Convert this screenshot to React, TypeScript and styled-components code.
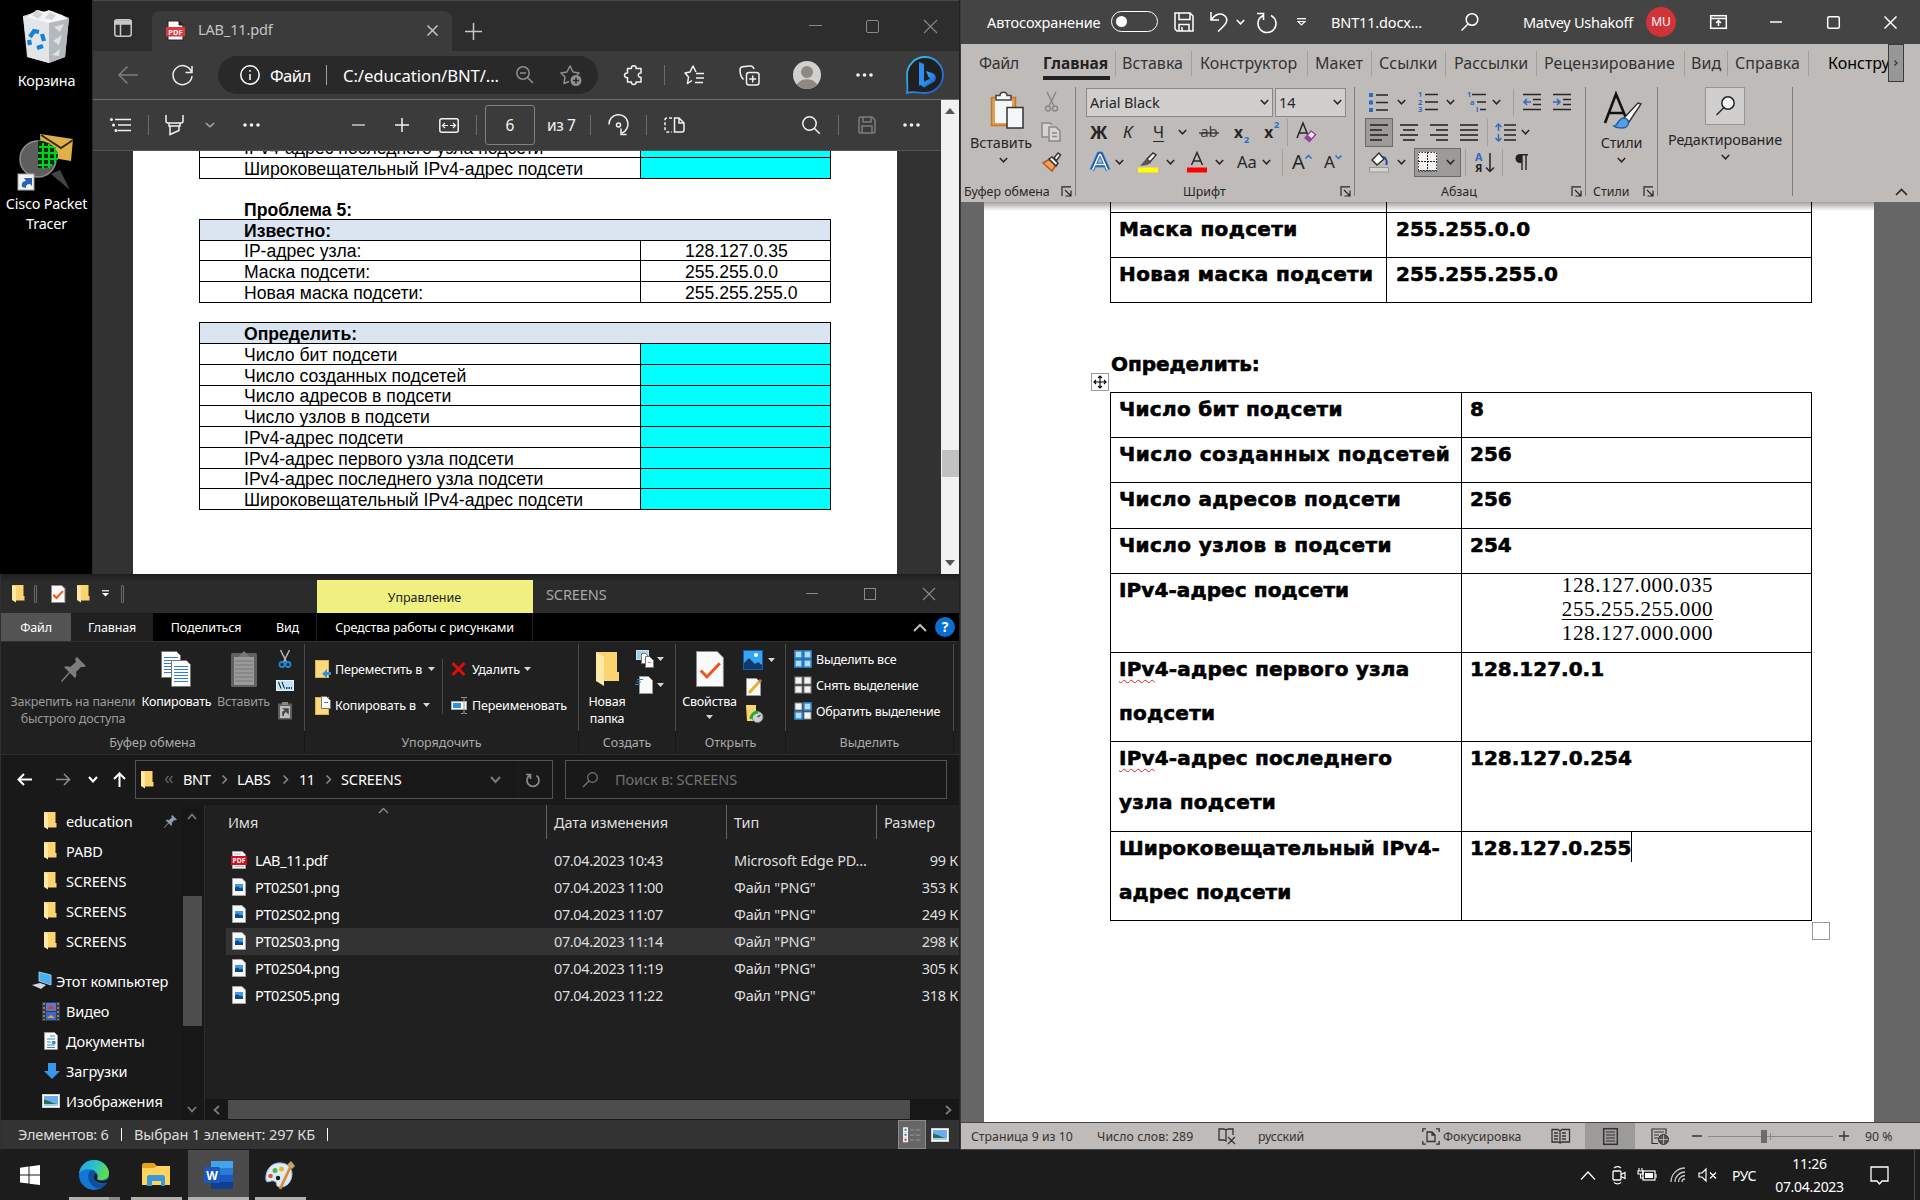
import React from "react";
import styled, { createGlobalStyle, css } from "styled-components";

const UI = `"Noto Sans", "Open Sans", sans-serif`;

const Global = createGlobalStyle`
  * { box-sizing: border-box; }
  html, body { margin: 0; padding: 0; background: #000; }
  body { font-family: ${UI}; overflow: hidden; }
`;

/* ---------- shared primitives ---------- */

type Gap = { $ml?: number };
type Sized = Gap & { $w?: number; $ls?: number };

const gap = css<Gap>`
  flex: none;
  margin-left: ${(p) => p.$ml ?? 0}px;
`;

const Glyph = styled.svg<Gap>`
  ${gap}
  display: block;
  fill: none;
  stroke: currentColor;
  stroke-width: 1.5;
  overflow: visible;
`;

const Text = styled.span<Sized>`
  ${gap}
  width: ${(p) => (p.$w ? `${p.$w}px` : "auto")};
  letter-spacing: ${(p) => p.$ls ?? 0}px;
  white-space: nowrap;
`;

const Row = styled.div`
  display: flex;
  align-items: center;
`;

type IconProps = { w: number; h: number; ml?: number; children: React.ReactNode; color?: string };
const Icon = ({ w, h, ml, children, color }: IconProps) => (
  <Glyph width={w} height={h} viewBox={`0 0 ${w} ${h}`} $ml={ml} color={color}>
    {children}
  </Glyph>
);

const Chevron = ({ ml, color, w = 9 }: { ml?: number; color?: string; w?: number }) => (
  <Icon w={w} h={6} ml={ml} color={color}>
    <path d={`M.8 1 L${w / 2} 4.8 L${w - 0.8} 1`} />
  </Icon>
);

const Tri = ({ ml }: { ml?: number }) => (
  <Icon w={7} h={4} ml={ml} color="#d8d8d8">
    <path d="M0 0h7L3.5 4z" fill="currentColor" stroke="none" />
  </Icon>
);

const Folder = ({ ml }: { ml?: number }) => (
  <Icon w={13} h={18} ml={ml}>
    <path d="M0 0h11.5v11h1v4.500H2z" fill="#fbd36f" stroke="none" />
    <path d="M0 0l4 2v15.500L0 15z" fill="#ffe9a6" stroke="none" />
  </Icon>
);

/* ---------- page frame ---------- */

const Screen = styled.div`
  width: 1920px;
  height: 1200px;
  display: flex;
  flex-direction: column;
  background: #000;
  overflow: hidden;
`;
const Main = styled.div`
  display: flex;
  height: 1150px;
  flex: none;
`;
const LeftHalf = styled.div`
  width: 960px;
  flex: none;
  display: flex;
  flex-direction: column;
`;
const TopLeft = styled.div`
  display: flex;
  height: 574px;
  flex: none;
`;

/* ---------- desktop ---------- */

const Desktop = styled.div`
  width: 92px;
  flex: none;
  background: #000;
  display: flex;
  flex-direction: column;
  align-items: center;
`;
const Shortcut = styled.div<{ $top: number }>`
  margin-top: ${(p) => p.$top}px;
  display: flex;
  flex-direction: column;
  align-items: center;
  color: #fff;
  font-size: 14.4px;
  letter-spacing: -0.2px;
  line-height: 20px;
  text-align: center;
  white-space: nowrap;
`;
const ShortcutName = styled.div<{ $gap: number }>`
  margin-top: ${(p) => p.$gap}px;
  padding-left: 1px;
`;

const DesktopArea = () => (
  <Desktop>
    <Shortcut $top={9}>
      <Icon w={48} h={55}>
        <g stroke="none">
          <path d="M1 7L14 3l16-1 17 7-4 39-16 6-22-6z" fill="#c9cdd1" />
          <path d="M1 7l26 6v41L6 48z" fill="#e3e6e8" />
          <path d="M27 13l20-4-4 39-16 6z" fill="#b4b9be" />
          <path d="M4 8l6-4 6-3 6 2 5-2 6 3 7 2 5 4-18 4z" fill="#f4f5f6" />
          <path d="M14 1l7 4-5 5-6-4zM28 3l6 3-4 5-7-2z" fill="#d2d6d9" />
          <path d="M32 18l10-3-4 8zM31 32l9-6-3 10zM30 46l8-6-1 7z" fill="#dfe2e5" />
        </g>
        <g stroke="#1183d6" strokeWidth="4.2">
          <path d="M8 28l4-6 5 1M20 25l2 7M21 37l-6 2M8 36l-1-5" />
        </g>
      </Icon>
      <ShortcutName $gap={7}>Корзина</ShortcutName>
    </Shortcut>
    <Shortcut $top={42}>
      <Icon w={56} h={58}>
        <path d="M22 1l33 5-2 22-30-5z" fill="#e0b04a" stroke="none" />
        <path d="M23 2l20 13L55 7" stroke="#3b2b08" strokeWidth="2" />
        <path d="M33 41l9-4 10 20z" fill="#444" stroke="none" />
        <circle cx="20" cy="26" r="18" fill="#5e5e5e" stroke="#8c8c8c" strokeWidth="1.5" />
        <path d="M20 8c10-1 18 6 20 14-1 9-8 14-20 13z" fill="#0a2a0a" stroke="none" />
        <path d="M21 14h15M20 20h20M20 26h20M20 32h14M25 10v26M31 11v24M37 14v16" stroke="#00d21c" strokeWidth="2" />
        <rect x="0" y="41" width="16" height="16" fill="#f2f2f2" stroke="#aaa" strokeWidth="1" />
        <path d="M4 54c-1-5 2-6 4-6l-2-3h8v8l-2-2c-3 0-4 1-4 4z" fill="#2c62b5" stroke="none" />
      </Icon>
      <ShortcutName $gap={3}>
        Cisco Packet
        <br />
        Tracer
      </ShortcutName>
    </Shortcut>
  </Desktop>
);

/* ---------- Edge ---------- */

const Edge = styled.section`
  width: 868px;
  flex: none;
  display: flex;
  flex-direction: column;
  background: #3b3b3b;
  border-left: 1px solid #2a2a2a;
  border-right: 1px solid #222;
  overflow: hidden;
  color: #f2f2f2;
`;
const EdgeTabs = styled(Row)`
  height: 51px;
  flex: none;
  background: #2d2d2d;
  border-top: 1px solid #474747;
`;
const EdgeTab = styled(Row)`
  width: 300px;
  height: 40px;
  margin: 10px 0 0 20px;
  padding-bottom: 1px;
  border-radius: 8px 8px 0 0;
  background: #3b3b3b;
  flex: none;
  color: #c4c4c4;
  font-size: 14.5px;
`;
const TabTitle = styled(Text)`
  padding-bottom: 3px;
`;
const EdgeNav = styled(Row)`
  height: 49px;
  flex: none;
  border-bottom: 1px solid #6e6e6e;
`;
const AddressPill = styled(Row)<Gap>`
  ${gap}
  width: 380px;
  height: 38px;
  border-radius: 19px;
  background: #292929;
  font-size: 16.7px;
  color: #fff;
`;
const VLine = styled.span<Gap & { $h?: number; $c?: string }>`
  ${gap}
  width: 1px;
  height: ${(p) => p.$h ?? 20}px;
  background: ${(p) => p.$c ?? "#6b6b6b"};
`;
const Avatar = styled.span<Gap>`
  ${gap}
  width: 28px;
  height: 28px;
  border-radius: 50%;
  background: #d2d0ce;
  overflow: hidden;
`;
const EdgeBody = styled.div`
  flex: 1;
  display: flex;
  min-height: 0;
`;
const PdfPane = styled.div`
  width: 848px;
  display: flex;
  flex-direction: column;
  background: #323232;
  flex: none;
`;
const PdfBar = styled(Row)`
  height: 51px;
  flex: none;
  background: #3b3b3b;
  border-bottom: 1px solid #555;
  font-size: 15.5px;
`;
const PageBox = styled(Row)<Gap>`
  ${gap}
  width: 50px;
  height: 40px;
  justify-content: center;
  border: 1px solid #808080;
  border-radius: 3px;
`;
const PdfPage = styled.div`
  width: 764px;
  margin-left: 40px;
  flex: 1;
  background: #fff;
  overflow: hidden;
  color: #000;
  font: 17.6px "Liberation Sans", Arial, sans-serif;
`;
const PdfTable = styled.div<{ $mt: number }>`
  width: 632px;
  margin: ${(p) => p.$mt}px 0 0 66px;
  border: 1px solid #000;
  border-top: none;
`;
const PdfRow = styled.div<{ $h: number; $head?: boolean }>`
  display: flex;
  height: ${(p) => p.$h}px;
  line-height: ${(p) => p.$h + 1}px;
  border-top: 1px solid #000;
  background: ${(p) => (p.$head ? "#dbe5f1" : "#fff")};
  font-weight: ${(p) => (p.$head ? 700 : 400)};
  white-space: nowrap;
`;
const PdfName = styled.span<{ $wide?: boolean }>`
  padding-left: 44px;
  width: ${(p) => (p.$wide ? 630 : 440)}px;
  flex: none;
`;
const PdfValue = styled.span<{ $fill?: boolean }>`
  flex: 1;
  border-left: 1px solid #000;
  padding-left: 44px;
  background: ${(p) => (p.$fill ? "#00ffff" : "transparent")};
`;
const PdfHeading = styled.div`
  font-weight: 700;
  height: 20px;
  line-height: 22px;
  margin: 20px 0 0 111px;
`;
const Scrollbar = styled.div`
  width: 18px;
  flex: none;
  background: #f1f1f1;
  display: flex;
  flex-direction: column;
  align-items: flex-end;
  color: #555;
`;
const ScrollThumb = styled.div`
  width: 17px;
  height: 27px;
  margin-top: 336px;
  background: #c1c1c1;
`;
const ScrollArrow = styled.div<{ $mt: number }>`
  margin: ${(p) => p.$mt}px 4px 0 0;
`;

const ANSWERS: [string, number][] = [
  ["Число бит подсети", 21],
  ["Число созданных подсетей", 21],
  ["Число адресов в подсети", 20],
  ["Число узлов в подсети", 21],
  ["IPv4-адрес подсети", 21],
  ["IPv4-адрес первого узла подсети", 21],
  ["IPv4-адрес последнего узла подсети", 20],
  ["Широковещательный IPv4-адрес подсети", 21],
];

const Dots = ({ ml, color }: { ml?: number; color?: string }) => (
  <Icon w={17} h={4} ml={ml} color={color}>
    <g fill="currentColor" stroke="none">
      <circle cx="2" cy="2" r="1.8" />
      <circle cx="8.5" cy="2" r="1.8" />
      <circle cx="15" cy="2" r="1.8" />
    </g>
  </Icon>
);

const EdgeWindow = () => (
  <Edge>
    <EdgeTabs>
      <Icon w={18} h={18} ml={21} color="#c8c8c8">
        <rect x=".8" y="2.8" width="16.4" height="16.4" rx="2.5" />
        <path d="M1 6h16M6.5 6v13" />
        <path d="M1 4h16v3H1z" fill="currentColor" />
      </Icon>
      <EdgeTab>
        <Icon w={19} h={20} ml={14}>
          <path d="M2 0h11l4 4v15H2z" fill="#fff" stroke="#222" strokeWidth="1" />
          <path d="M13 0v4h4z" fill="#222" stroke="#222" strokeWidth="1" />
          <rect x="0" y="6" width="19" height="9.5" rx="1" fill="#e5353b" stroke="none" />
          <text x="9.5" y="13.6" fill="#fff" stroke="none" textAnchor="middle" fontSize="7.5" fontWeight="700" fontFamily="Noto Sans">PDF</text>
        </Icon>
        <TabTitle $ml={13} $w={219} $ls={-0.15}>LAB_11.pdf</TabTitle>
        <Icon w={11} h={11} ml={10}><path d="M.5 .5l10 10M10.5 .5l-10 10" /></Icon>
      </EdgeTab>
      <Icon w={17} h={17} ml={13} color="#c8c8c8"><path d="M8.5 5v17M0 13.5h17" /></Icon>
      <Icon w={13} h={2} ml={327} color="#8a8a8a"><path d="M0 .5h13" strokeWidth="1" /></Icon>
      <Icon w={13} h={13} ml={44} color="#8a8a8a"><rect x=".5" y=".5" width="12" height="12" rx="1.5" strokeWidth="1" /></Icon>
      <Icon w={13} h={13} ml={45} color="#8a8a8a"><path d="M0 0l13 13M13 0L0 13" strokeWidth="1.1" /></Icon>
    </EdgeTabs>
    <EdgeNav>
      <Icon w={20} h={18} ml={25} color="#7d7d7d"><path d="M20 9H1M9.5 .5L1 9l8.5 8.5" /></Icon>
      <Icon w={21} h={21} ml={34} color="#ededed"><path d="M19.5 7A9.5 9.5 0 1 0 20 11M20 1v6.500h-6.500" /></Icon>
      <AddressPill $ml={25}>
        <Icon w={20} h={20} ml={22}>
          <circle cx="10" cy="10" r="9.2" />
          <path d="M10 9v6M10 5v1.8" />
        </Icon>
        <Text $ml={10} $w={41} $ls={-0.6}>Файл</Text>
        <VLine $ml={15} $c="#a0a0a0" />
        <Text $ml={16} $w={157} $ls={-0.1}>C:/education/BNT/...</Text>
        <Icon w={18} h={18} ml={16} color="#8f8f8f"><circle cx="7" cy="7" r="6.2" /><path d="M11.5 11.500L17 17M4 7h6" /></Icon>
        <Icon w={22} h={21} ml={26} color="#8f8f8f">
          <path d="M9 16.500l-5 2 1-6.500L1 8l6-1 3-6 3 6 6 1-2 2" strokeLinejoin="round" />
          <circle cx="16" cy="15.5" r="5.5" fill="currentColor" stroke="none" />
          <path d="M16 12.500v6M13 15.500h6" stroke="#292929" />
        </Icon>
      </AddressPill>
      <Icon w={20} h={20} ml={26}>
        <path d="M3.500 3.500h4c-1-3.800 5.500-3.800 4.500 0h5v4.500c-3.600-.8-3.600 5 0 4.200V17h-5c1 3.300-5.500 3.300-4.500 0h-4v-4.500c-4 .8-4-5 0-4.500z" strokeLinejoin="round" />
      </Icon>
      <VLine $ml={20} />
      <Icon w={20} h={20} ml={19}>
        <path d="M8 15.500L3.500 18.500l1-6.500L1 8l5-1L9 1l3 6M12 8.500h8M12 13h8M11 17.500h8" strokeLinejoin="round" />
      </Icon>
      <Icon w={21} h={21} ml={35}>
        <rect x="7.5" y="7.5" width="12.5" height="12.5" rx="2.5" />
        <path d="M13.700 10.500v7M10.200 14h7M4.500 14.500C2 12 1 8 1 5c0-2 1-3 2.500-3.300L11 1c2-.2 3.500 1 4 3" />
      </Icon>
      <Avatar $ml={33}>
        <Icon w={28} h={28}>
          <g fill="#8d8882" stroke="none"><circle cx="14" cy="11" r="6" /><path d="M3 28c0-13 22-13 22 0z" /></g>
        </Icon>
      </Avatar>
      <Dots ml={35} />
      <Icon w={38} h={38} ml={33}>
        <defs>
          <linearGradient id="bing" x1="0" y1="0" x2="1" y2="1"><stop offset="0" stopColor="#35c8f0" /><stop offset="1" stopColor="#1b55d9" /></linearGradient>
        </defs>
        <path d="M1 37c1-5 0-10 0-18A18 18 0 1 1 19 37c-6 0-12-2-18 0z" fill="#202020" stroke="url(#bing)" strokeWidth="1.8" />
        <path d="M13 6l5 2v18l-5 4z" fill="#2f8cf0" stroke="none" />
        <path d="M13 28l5 3.500 11-6.500c2-4 0-7-3-8l-6-2 2.500 6 2 1.500z" fill="url(#bing)" stroke="none" />
      </Icon>
    </EdgeNav>
    <EdgeBody>
      <PdfPane>
        <PdfBar>
          <Icon w={21} h={14} ml={17}>
            <path d="M5 1.500h16M8 7h13M8 12.500h13" />
            <g fill="currentColor" stroke="none"><circle cx="1.5" cy="1.5" r="1.5" /><circle cx="3.5" cy="7" r="1.5" /><circle cx="6" cy="12.5" r="1.5" /></g>
          </Icon>
          <VLine $ml={17} />
          <Icon w={19} h={20} ml={16}><path d="M1 0v6a2 2 0 0 0 2 2h13a2 2 0 0 0 2-2V0M4 8v3h11V8M5 11v8.500l9-4V11" /></Icon>
          <Chevron ml={21} color="#a8a8a8" w={10} />
          <Dots ml={28} />
          <Icon w={13} h={2} ml={92} color="#c8c8c8"><path d="M0 1h13" /></Icon>
          <Icon w={14} h={14} ml={30}><path d="M7 0v14M0 7h14" /></Icon>
          <Icon w={20} h={15} ml={30}><rect x=".8" y=".8" width="18.4" height="13.4" rx="2" /><path d="M9 7.500H4M6 5L3.500 7.500 6 10M11 7.500h5M14 5l2.500 2.500L14 10" strokeWidth="1.2" /></Icon>
          <VLine $ml={17} />
          <PageBox $ml={8}>6</PageBox>
          <Text $ml={12} $w={30} $ls={-0.4}>из 7</Text>
          <VLine $ml={13} />
          <Icon w={21} h={20} ml={17}><path d="M1 9.500A9.500 9.500 0 1 1 14 18M20 13M18.500 19.500H13v-6" /><circle cx="10.5" cy="10" r="2" /></Icon>
          <VLine $ml={17} />
          <Icon w={21} h={16} ml={17}><path d="M10.500 1v14H18a2 2 0 0 0 2-2V6l-5-5zM15 1v5h5" /><path d="M8 1H3a2 2 0 0 0-2 2v10a2 2 0 0 0 2 2h5" strokeDasharray="3 2" /></Icon>
          <Icon w={18} h={18} ml={117}><circle cx="7.5" cy="7.5" r="6.7" /><path d="M12.300 12.300l5.500 5.500" /></Icon>
          <VLine $ml={18} />
          <Icon w={18} h={18} ml={19} color="#7d7d7d"><path d="M1 2.500A1.500 1.500 0 0 1 2.500 1h11.500l3 3v11.500a1.500 1.500 0 0 1-1.500 1.500h-13A1.500 1.500 0 0 1 1 15.500zM5 1v5h8V1M4 17v-7h10v7" /></Icon>
          <Dots ml={27} />
        </PdfBar>
        <PdfPage>
          <PdfTable $mt={-14}>
            <PdfRow $h={20}><PdfName>IPv4-адрес последнего узла подсети</PdfName><PdfValue $fill /></PdfRow>
            <PdfRow $h={21}><PdfName>Широковещательный IPv4-адрес подсети</PdfName><PdfValue $fill /></PdfRow>
          </PdfTable>
          <PdfHeading>Проблема 5:</PdfHeading>
          <PdfTable $mt={0}>
            <PdfRow $h={21} $head><PdfName $wide>Известно:</PdfName></PdfRow>
            <PdfRow $h={20}><PdfName>IP-адрес узла:</PdfName><PdfValue>128.127.0.35</PdfValue></PdfRow>
            <PdfRow $h={21}><PdfName>Маска подсети:</PdfName><PdfValue>255.255.0.0</PdfValue></PdfRow>
            <PdfRow $h={21}><PdfName>Новая маска подсети:</PdfName><PdfValue>255.255.255.0</PdfValue></PdfRow>
          </PdfTable>
          <PdfTable $mt={19}>
            <PdfRow $h={21} $head><PdfName $wide>Определить:</PdfName></PdfRow>
            {ANSWERS.map(([t, h]) => (
              <PdfRow key={t} $h={h}><PdfName>{t}</PdfName><PdfValue $fill /></PdfRow>
            ))}
          </PdfTable>
        </PdfPage>
      </PdfPane>
      <Scrollbar>
        <ScrollArrow $mt={8}><Icon w={10} h={6}><path d="M0 6h10L5 0z" fill="currentColor" stroke="none" /></Icon></ScrollArrow>
        <ScrollThumb />
        <ScrollArrow $mt={83}><Icon w={10} h={6}><path d="M0 0h10L5 6z" fill="currentColor" stroke="none" /></Icon></ScrollArrow>
      </Scrollbar>
    </EdgeBody>
  </Edge>
);

/* ---------- Explorer ---------- */

const Explorer = styled.section`
  flex: 1;
  min-height: 0;
  display: flex;
  flex-direction: column;
  background: #191919;
  border-left: 1px solid #303030;
  border-right: 1px solid #222;
  color: #fff;
  overflow: hidden;
`;
const ExTitle = styled.div`
  height: 39px;
  flex: none;
  display: flex;
  align-items: center;
  background: linear-gradient(#1e1e1e, #2b2b2b 8px);
`;
const QuickDivider = styled.span<Gap>`
  ${gap}
  width: 3px;
  height: 18px;
  border: 1px solid #6a6a6a;
  border-radius: 1px;
`;
const ManageTab = styled.div`
  width: 216px;
  height: 33px;
  align-self: flex-end;
  margin-left: 193px;
  flex: none;
  background: #f0f080;
  color: #222;
  text-align: center;
  font-size: 12.5px;
  line-height: 36px;
  padding-right: 1px;
`;
const ExCaption = styled(Text)`
  color: #a8a8a8;
  font-size: 14.5px;
`;
const ExTabs = styled.div`
  height: 28px;
  flex: none;
  display: flex;
  align-items: center;
  background: #000;
  font-size: 12.5px;
`;
const ExTab = styled.div<{ $w: number; $bg?: string; $edge?: boolean }>`
  width: ${(p) => p.$w}px;
  height: 28px;
  line-height: 29px;
  flex: none;
  text-align: center;
  white-space: nowrap;
  letter-spacing: -0.15px;
  background: ${(p) => p.$bg ?? "transparent"};
  border-right: ${(p) => (p.$edge ? "1px solid #222" : "none")};
`;
const Help = styled.span`
  width: 20px;
  height: 20px;
  margin-left: 8px;
  border-radius: 50%;
  background: #0a6fd0;
  color: #fff;
  font-size: 14px;
  font-weight: 700;
  line-height: 20px;
  text-align: center;
`;
const ExRibbon = styled.div`
  height: 114px;
  flex: none;
  display: flex;
  background: #202020;
  border-top: 1px solid #2f2f2f;
  border-bottom: 1px solid #2f2f2f;
  font-size: 12.5px;
`;
const ExGroup = styled.div<{ $w: number }>`
  width: ${(p) => p.$w}px;
  flex: none;
  display: flex;
  flex-direction: column;
`;
const ExGroupBody = styled.div`
  height: 89px;
  margin-top: 2px;
  border-right: 1px solid #4a4a4a;
  display: flex;
`;
const ExGroupName = styled.div`
  flex: 1;
  text-align: center;
  line-height: 23px;
  color: #ababab;
  letter-spacing: 0;
  border-right: 1px solid #181818;
`;
const BigButton = styled.div<{ $w: number; $ml?: number; $dim?: boolean }>`
  ${gap}
  width: ${(p) => p.$w}px;
  padding-top: 7px;
  display: flex;
  flex-direction: column;
  align-items: center;
  text-align: center;
  white-space: nowrap;
  line-height: 17px;
  letter-spacing: -0.2px;
  color: ${(p) => (p.$dim ? "#9b9b9b" : "#fff")};
`;
const BigIcon = styled.div`
  height: 36px;
  margin-bottom: 6px;
  display: flex;
  align-items: center;
`;
const SmallColumn = styled.div<{ $ml?: number; $pitch: number; $top?: number; $w?: number }>`
  ${gap}
  width: ${(p) => (p.$w ? `${p.$w}px` : "auto")};
  padding-top: ${(p) => p.$top ?? 2}px;
  display: flex;
  flex-direction: column;
  & > * {
    height: ${(p) => p.$pitch}px;
  }
`;
const GroupRule = styled.span`
  width: 1px;
  height: 55px;
  margin-top: 15px;
  background: #4a4a4a;
  flex: none;
`;
const ExNav = styled.div`
  height: 50px;
  flex: none;
  display: flex;
  align-items: center;
  padding-bottom: 1px;
  background: #191919;
  font-size: 14.5px;
`;
const NavBox = styled(Row)<Sized>`
  ${gap}
  width: ${(p) => p.$w}px;
  height: 39px;
  border: 1px solid #535353;
`;
const Crumbs = styled(Text)`
  padding-bottom: 2px;
`;
const SearchHint = styled(Text)`
  color: #727272;
  padding-bottom: 2px;
`;
const ExBody = styled.div`
  height: 315px;
  flex: none;
  display: flex;
  font-size: 14.5px;
`;
const Tree = styled.div`
  width: 181px;
  flex: none;
  display: flex;
  flex-direction: column;
  padding-top: 1px;
`;
const TreeItem = styled(Row)<{ $root?: boolean }>`
  height: 30px;
  flex: none;
  margin-top: ${(p) => (p.$root ? 10 : 0)}px;
  padding-left: ${(p) => (p.$root ? 31 : 41)}px;
`;
const TreeGlyph = styled(Row)<{ $w: number }>`
  width: ${(p) => p.$w}px;
  flex: none;
`;
const TreeScroll = styled.div`
  width: 20px;
  flex: none;
  background: #171717;
  display: flex;
  flex-direction: column;
  align-items: center;
  justify-content: space-between;
  padding: 8px 0 7px;
`;
const TreeThumb = styled.div`
  width: 19px;
  height: 130px;
  margin-top: -2px;
  margin-bottom: 2px;
  background: #4d4d4d;
`;
const ListPane = styled.div`
  flex: 1;
  display: flex;
  flex-direction: column;
  margin-left: 2px;
  border-left: 1px solid #2b2b2b;
  background: #202020;
  min-width: 0;
`;
const ListHead = styled.div`
  height: 33px;
  flex: none;
  display: grid;
  grid-template-columns: 342px 180px 150px 1fr;
  color: #dedede;
`;
const HeadCell = styled.div<{ $pad: number; $last?: boolean }>`
  padding-left: ${(p) => p.$pad}px;
  line-height: 34px;
  white-space: nowrap;
  letter-spacing: -0.1px;
  border-right: ${(p) => (p.$last ? "none" : "1px solid #636363")};
  display: flex;
`;
const SortMark = styled.span`
  margin: 3px 0 0 121px;
`;
const Spacer = styled.div`
  height: 9px;
  flex: none;
`;
const FileRow = styled.div<{ $on?: boolean }>`
  height: 27px;
  flex: none;
  margin-left: 21px;
  padding-bottom: 2px;
  display: grid;
  grid-template-columns: 29px 299px 180px 148px 1fr;
  align-items: center;
  white-space: nowrap;
  background: ${(p) => (p.$on ? "#333" : "transparent")};
  color: #dedede;
  overflow: hidden;
`;
const FileGlyph = styled.span`
  padding-left: 6px;
`;
const FileName = styled.span`
  color: #fff;
  letter-spacing: -0.38px;
`;
const FileDate = styled.span`
  letter-spacing: -0.38px;
`;
const FileKind = styled.span`
  letter-spacing: -0.18px;
`;
const FileSize = styled.span`
  text-align: right;
  padding-right: 1px;
  letter-spacing: -0.3px;
`;
const HScroll = styled(Row)`
  height: 21px;
  margin-top: auto;
  background: #171717;
  padding-left: 8px;
`;
const HThumb = styled.div`
  width: 682px;
  height: 19px;
  margin-left: 8px;
  background: #4d4d4d;
`;
const ExStatus = styled(Row)`
  height: 29px;
  flex: none;
  background: #333;
  color: #dcdcdc;
  font-size: 14.5px;
`;
const StatusText = styled(Text)`
  padding-bottom: 1px;
`;
const ViewToggle = styled(Row)`
  width: 28px;
  height: 29px;
  margin-left: 570px;
  justify-content: center;
  background: #666;
  border: 1px solid #8a8a8a;
`;

const CheckDoc = ({ w, h, ml }: { w: number; h: number; ml?: number }) => (
  <Icon w={w} h={h} ml={ml}>
    <path d={`M.5 .5h${w * 0.74}l${w * 0.22} ${w * 0.22}V${h - 0.5}H.5z`} fill="#fafafa" stroke="#8a8a8a" strokeWidth="1" />
    <path d={`M${w * 0.17} ${h * 0.54}l${w * 0.22} ${h * 0.18}L${w * 0.85} ${h * 0.34}`} stroke="#f0541c" strokeWidth={w > 20 ? 3 : 2} />
  </Icon>
);
const Sheet = ({ x, y, w, h, lines = "#2f7ed8" }: { x: number; y: number; w: number; h: number; lines?: string }) => (
  <g>
    <path d={`M${x + 0.5} ${y + 0.5}h${w - 5}l4 4v${h - 5}h-${w - 1}z`} fill="#fff" stroke="#777" strokeWidth="1" />
    {Array.from({ length: Math.floor((h - 8) / 3) }, (_, i) => (
      <path key={i} d={`M${x + 3} ${y + 6.5 + i * 3}h${w - 6}`} stroke={lines} strokeWidth="1" />
    ))}
  </g>
);
const PinGlyph = ({ s, ml, color }: { s: number; ml?: number; color: string }) => (
  <Glyph width={s} height={s} viewBox="0 0 25 25" $ml={ml} color={color}>
    <path d="M16 0l9 9-2 1-3 0-5 5c1 3 0 5-1 6l-5-5-8 9-1-1 8-9-5-5c2-1 4-1 6 0l6-5-1-3z" fill="currentColor" stroke="none" />
  </Glyph>
);
const Picture = ({ w, h, ml }: { w: number; h: number; ml?: number }) => (
  <Icon w={w} h={h} ml={ml}>
    <rect x=".5" y=".5" width={w - 1} height={h - 1} fill="#fff" stroke="#d0d0d0" strokeWidth="1" />
    <rect x="2" y="2" width={w - 4} height={h - 4} fill="#69aef0" stroke="none" />
    <path d={`M2 ${h * 0.4}l5 1.500 4 2 ${w - 13} 1.500v1H2z`} fill="#2f6b50" stroke="none" />
    <path d={`M2 ${h - 4}h${w - 4}v2H2z`} fill="#9fd0ee" stroke="none" />
  </Icon>
);
const PngFile = () => (
  <Icon w={14} h={18}>
    <path d="M.5 .5h9.500l3.500 3.500v13.500H.5z" fill="#fafafa" stroke="#a5a5a5" strokeWidth="1" />
    <rect x="3" y="6" width="8" height="7" fill="#3d9be8" stroke="none" />
    <path d="M3 13V9.500l3-1 2 2 1.500-1L11 11v2z" fill="#11458c" stroke="none" />
  </Icon>
);
const PdfFile = () => (
  <Icon w={16} h={18} ml={-1}>
    <path d="M1.500 .5h10l3 3v14h-13z" fill="#fafafa" stroke="#a5a5a5" strokeWidth="1" />
    <path d="M3 3h7M3 15.500h10" stroke="#bbb" strokeWidth="1" />
    <rect x="0" y="5" width="16" height="9" fill="#d40f1d" stroke="none" />
    <text x="8" y="12" fill="#fff" stroke="none" textAnchor="middle" fontSize="6.8" fontWeight="700" fontFamily="Noto Sans">PDF</text>
  </Icon>
);
const SelectGrid = ({ on }: { on: boolean[] }) => (
  <Icon w={18} h={18}>
    {on.map((a, i) => (
      <rect
        key={i}
        x={(i % 2) * 9 + 1}
        y={Math.floor(i / 2) * 9 + 1}
        width="7"
        height="7"
        fill={a ? "#b7dcfa" : "#f3f3f3"}
        stroke={a ? "#2f8fe0" : "#8a8a8a"}
        strokeWidth={a ? 1.6 : 1}
      />
    ))}
  </Icon>
);

const FILES: [string, string, string, string][] = [
  ["LAB_11.pdf", "07.04.2023 10:43", "Microsoft Edge PD...", "99 К"],
  ["PT02S01.png", "07.04.2023 11:00", 'Файл "PNG"', "353 К"],
  ["PT02S02.png", "07.04.2023 11:07", 'Файл "PNG"', "249 К"],
  ["PT02S03.png", "07.04.2023 11:14", 'Файл "PNG"', "298 К"],
  ["PT02S04.png", "07.04.2023 11:19", 'Файл "PNG"', "305 К"],
  ["PT02S05.png", "07.04.2023 11:22", 'Файл "PNG"', "318 К"],
];
const FOLDERS = ["education", "PABD", "SCREENS", "SCREENS", "SCREENS"];

const Crumb = ({ ml }: { ml: number }) => (
  <Icon w={5} h={9} ml={ml} color="#8a8a8a"><path d="M.5 .5l4 4-4 4" /></Icon>
);

const ExplorerWindow = () => (
  <Explorer>
    <ExTitle>
      <Folder ml={11} />
      <QuickDivider $ml={9} />
      <CheckDoc w={14} h={18} ml={14} />
      <Folder ml={12} />
      <Icon w={7} h={7} ml={12}><path d="M0 .8h7" strokeWidth="1.2" /><path d="M0 3h7L3.500 6.500z" fill="currentColor" stroke="none" /></Icon>
      <QuickDivider $ml={12} />
      <ManageTab>Управление</ManageTab>
      <ExCaption $ml={13} $w={61} $ls={-0.1}>SCREENS</ExCaption>
      <Icon w={12} h={2} ml={199} color="#8a8a8a"><path d="M0 .5h12" strokeWidth="1" /></Icon>
      <Icon w={12} h={12} ml={46} color="#8a8a8a"><rect x=".5" y=".5" width="11" height="11" strokeWidth="1" /></Icon>
      <Icon w={12} h={12} ml={47} color="#8a8a8a"><path d="M0 0l12 12M12 0L0 12" strokeWidth="1.1" /></Icon>
    </ExTitle>
    <ExTabs>
      <ExTab $w={70} $bg="#535353">Файл</ExTab>
      <ExTab $w={82} $bg="#202020">Главная</ExTab>
      <ExTab $w={106}>Поделиться</ExTab>
      <ExTab $w={58} $edge>Вид</ExTab>
      <ExTab $w={216} $edge>Средства работы с рисунками</ExTab>
      <Icon w={14} h={9} ml={380} color="#b8b8b8"><path d="M1 8l6-6 6 6" strokeWidth="2.2" /></Icon>
      <Help>?</Help>
    </ExTabs>
    <ExRibbon>
      <ExGroup $w={304}>
        <ExGroupBody>
          <BigButton $ml={7} $w={130} $dim>
            <BigIcon><PinGlyph s={25} color="#7d7d7d" /></BigIcon>
            Закрепить на панели
            <br />
            быстрого доступа
          </BigButton>
          <BigButton $w={77}>
            <BigIcon>
              <Icon w={31} h={36}><Sheet x={0} y={0} w={20} h={27} /><Sheet x={10} y={9} w={20} h={27} /></Icon>
            </BigIcon>
            Копировать
          </BigButton>
          <BigButton $w={57} $dim>
            <BigIcon>
              <Icon w={26} h={36}>
                <rect x="0" y="2" width="26" height="34" rx="1.5" fill="#606060" stroke="none" />
                <rect x="3" y="6" width="20" height="28" fill="#9a9a9a" stroke="none" />
                <path d="M7 6l6-6 6 6z" fill="#777" stroke="none" />
                <path d="M4 10h18M4 14h18M4 18h18M4 22h18M4 26h18M4 30h18" stroke="#777" strokeWidth="1" />
              </Icon>
            </BigIcon>
            Вставить
          </BigButton>
          <SmallColumn $pitch={26} $w={30}>
            <Row>
              <Icon w={12} h={18} ml={7}>
                <path d="M1.500 0l6 12M10.500 0l-6 12" stroke="#b9b9b9" />
                <circle cx="3" cy="14.5" r="2.5" stroke="#1b8ad6" strokeWidth="1.8" /><circle cx="9" cy="14.5" r="2.5" stroke="#1b8ad6" strokeWidth="1.8" />
              </Icon>
            </Row>
            <Row>
              <Icon w={18} h={11} ml={4}>
                <rect x=".5" y=".5" width="17" height="10" fill="#bfe3f8" stroke="#e8f5fd" strokeWidth="1" />
                <path d="M2.500 2l2.500 6.500M6 2l2.500 6.500" stroke="#111" strokeWidth="1" /><path d="M10 8h1.500M12.500 8H14M15 8h1" stroke="#111" />
              </Icon>
            </Row>
            <Row>
              <Icon w={14} h={18} ml={6}>
                <rect x="0" y="1.5" width="14" height="16" fill="#606060" stroke="none" />
                <rect x="2" y="4" width="10" height="12" fill="#bdbdbd" stroke="none" /><path d="M4 0h6v3H4z" fill="#888" stroke="none" />
                <path d="M5 14V10l3-1M6 7h4v4z" stroke="#444" fill="#444" />
              </Icon>
            </Row>
          </SmallColumn>
        </ExGroupBody>
        <ExGroupName>Буфер обмена</ExGroupName>
      </ExGroup>
      <ExGroup $w={274}>
        <ExGroupBody>
          <SmallColumn $ml={10} $pitch={36} $top={7} $w={127}>
            <Row>
              <Icon w={16} h={18}><rect x=".5" y=".5" width="13" height="17" fill="#fbd97e" stroke="#e0b04a" strokeWidth="1" /><path d="M16 12h-4V9l-5 5 5 4v-3h4z" fill="#2f8fe0" stroke="none" /></Icon>
              <Text $ml={4} $w={88} $ls={-0.2}>Переместить в</Text>
              <Tri ml={5} />
            </Row>
            <Row>
              <Icon w={17} h={19}><rect x=".5" y="1.5" width="13" height="17" fill="#fbd97e" stroke="#e0b04a" strokeWidth="1" /><Sheet x={6} y={0} w={10} h={13} /></Icon>
              <Text $ml={3} $w={84} $ls={-0.1}>Копировать в</Text>
              <Tri ml={4} />
            </Row>
          </SmallColumn>
          <GroupRule />
          <SmallColumn $ml={8} $pitch={36} $top={7}>
            <Row>
              <Icon w={15} h={14}><path d="M1.500 1l12 12M13.500 1l-12 12" stroke="#e00b0b" strokeWidth="3" /></Icon>
              <Text $ml={6} $w={47} $ls={-0.1}>Удалить</Text>
              <Tri ml={5} />
            </Row>
            <Row>
              <Icon w={17} h={17}>
                <rect x=".5" y="4.5" width="15" height="8" fill="#fff" stroke="#aaa" strokeWidth="1" /><rect x="2" y="6" width="8" height="5" fill="#2f8fe0" stroke="none" />
                <path d="M13 1v15M10 .5h2.500l.5 .5 .5-.5H16M10 16.500h2.500l.5-.5 .5 .5H16" stroke="#999" strokeWidth="1" />
              </Icon>
              <Text $ml={4} $ls={-0.12}>Переименовать</Text>
            </Row>
          </SmallColumn>
        </ExGroupBody>
        <ExGroupName>Упорядочить</ExGroupName>
      </ExGroup>
      <ExGroup $w={97}>
        <ExGroupBody>
          <BigButton $ml={2} $w={52}>
            <BigIcon>
              <Icon w={23} h={36}><path d="M0 1h21v20h2v9H4z" fill="#fbd36f" stroke="none" /><path d="M0 1l8 5v29L0 30z" fill="#ffe9a6" stroke="none" /></Icon>
            </BigIcon>
            Новая
            <br />
            папка
          </BigButton>
          <SmallColumn $ml={3} $pitch={26}>
            <Row>
              <Icon w={18} h={18}><rect x=".5" y=".5" width="12" height="9" fill="#9cd0f0" stroke="#ddd" strokeWidth="1" /><Sheet x={5} y={3} w={9} h={11} lines="#ccc" /><Sheet x={9} y={6} w={9} h={12} lines="#e08080" /></Icon>
              <Tri ml={3} />
            </Row>
            <Row>
              <Icon w={18} h={18}><path d="M3.500 .5h9l4 4v13h-13z" fill="#fafafa" stroke="#999" strokeWidth="1" /><path d="M1 3.500h6M0 6h5M-1 8.500h5" stroke="#2c7fc0" strokeWidth="1.2" /></Icon>
              <Tri ml={3} />
            </Row>
          </SmallColumn>
        </ExGroupBody>
        <ExGroupName>Создать</ExGroupName>
      </ExGroup>
      <ExGroup $w={110}>
        <ExGroupBody>
          <BigButton $ml={3} $w={61}>
            <BigIcon><CheckDoc w={28} h={36} /></BigIcon>
            Свойства
            <PropsArrow><Tri /></PropsArrow>
          </BigButton>
          <SmallColumn $ml={3} $pitch={27}>
            <Row>
              <Icon w={20} h={20}><rect x=".5" y=".5" width="19" height="19" fill="#35a7f0" stroke="#0d62b8" strokeWidth="1" /><path d="M1 19v-6l5-5 6 6 3-2 4 3v4z" fill="#12396e" stroke="none" /><circle cx="13" cy="5" r="2" fill="#fff" stroke="none" /></Icon>
              <Tri ml={5} />
            </Row>
            <Row>
              <Icon w={16} h={18} ml={3}><path d="M.5 .5h10l4 4v13H.5z" fill="#fafafa" stroke="#999" strokeWidth="1" /><path d="M3 15l10-11" stroke="#e8b32a" strokeWidth="3" /><path d="M13 4l2-2" stroke="#d26a6a" strokeWidth="3" /></Icon>
            </Row>
            <Row>
              <Icon w={18} h={18} ml={3}><path d="M0 0h10v16H1z" fill="#fbd36f" stroke="none" /><circle cx="11.5" cy="12" r="5.5" fill="#cfcfcf" stroke="#777" strokeWidth="1" /><path d="M5 14a7 7 0 0 1 7-7" stroke="#1fae3a" strokeWidth="3" /><path d="M11.500 12l3-2" stroke="#444" /></Icon>
            </Row>
          </SmallColumn>
        </ExGroupBody>
        <ExGroupName>Открыть</ExGroupName>
      </ExGroup>
      <ExGroup $w={168}>
        <ExGroupBody>
          <SmallColumn $ml={8} $pitch={26}>
            <Row><SelectGrid on={[true, true, true, true]} /><Text $ml={4} $ls={-0.22}>Выделить все</Text></Row>
            <Row><SelectGrid on={[false, false, false, false]} /><Text $ml={4} $ls={-0.26}>Снять выделение</Text></Row>
            <Row><SelectGrid on={[false, true, true, false]} /><Text $ml={4} $ls={-0.24}>Обратить выделение</Text></Row>
          </SmallColumn>
        </ExGroupBody>
        <ExGroupName>Выделить</ExGroupName>
      </ExGroup>
    </ExRibbon>
    <ExNav>
      <Icon w={15} h={13} ml={16}><path d="M15 6.500H1.500M7 1L1.500 6.500 7 12" strokeWidth="2" /></Icon>
      <Icon w={15} h={13} ml={24} color="#8a8a8a"><path d="M0 6.500h13.500M8 1l5.500 5.500L8 12" strokeWidth="1.6" /></Icon>
      <Icon w={10} h={7} ml={17}><path d="M1 1l4 4.500L9 1" strokeWidth="2" /></Icon>
      <Icon w={13} h={15} ml={15}><path d="M6.500 15V1.500M1 7l5.500-5.500L12 7" strokeWidth="2" /></Icon>
      <NavBox $ml={9} $w={418}>
        <Folder ml={5} />
        <Icon w={8} h={7} ml={11} color="#666"><path d="M3.500 0L.5 3.500l3 3.500M7.500 0l-3 3.500 3 3.500" strokeWidth="1.2" /></Icon>
        <Crumbs $ml={10} $w={28} $ls={-0.3}>BNT</Crumbs>
        <Crumb ml={11} />
        <Crumbs $ml={10} $w={35} $ls={-0.2}>LABS</Crumbs>
        <Crumb ml={11} />
        <Crumbs $ml={11} $w={14} $ls={-0.5}>11</Crumbs>
        <Crumb ml={13} />
        <Crumbs $ml={10} $w={61} $ls={-0.1}>SCREENS</Crumbs>
        <Icon w={11} h={8} ml={88} color="#7a7a7a"><path d="M1 1l4.500 5L10 1" strokeWidth="2" /></Icon>
        <VLine $ml={12} $h={37} $c="#141414" />
        <Icon w={14} h={14} ml={12} color="#8a8a8a"><path d="M3.500 2.500a6 6 0 1 0 7 0M0 1.500h4.500V6" strokeWidth="1.7" /></Icon>
      </NavBox>
      <NavBox $ml={12} $w={382}>
        <Icon w={15} h={15} ml={17} color="#7a7a7a"><circle cx="9.5" cy="5.5" r="4.8" strokeWidth="1.2" /><path d="M6 9L0 15" strokeWidth="1.2" /></Icon>
        <SearchHint $ml={17} $ls={-0.12}>Поиск в: SCREENS</SearchHint>
      </NavBox>
    </ExNav>
    <ExBody>
      <Tree>
        {FOLDERS.map((f, i) => (
          <TreeItem key={i}>
            <TreeGlyph $w={24}><Folder ml={2} /></TreeGlyph>
            <Text $w={98} $ls={-0.15}>{f}</Text>
            {i === 0 && <PinGlyph s={13} color="#8e9aa6" />}
          </TreeItem>
        ))}
        <TreeItem $root>
          <TreeGlyph $w={24}>
            <Icon w={20} h={18}><path d="M7 0l12 3v10L7 9z" fill="#45b1f5" stroke="#9fc4dc" strokeWidth="1" /><path d="M0 13l8-2 6 2-5 4z" fill="#cfd8de" stroke="none" /></Icon>
          </TreeGlyph>
          <Text $ls={-0.1}>Этот компьютер</Text>
        </TreeItem>
        <TreeItem>
          <TreeGlyph $w={24}>
            <Icon w={18} h={19}>
              <rect x="0" y="0" width="18" height="19" fill="#3a3a3a" stroke="none" /><rect x="4" y="1" width="10" height="8" fill="#5b74d8" stroke="none" /><rect x="4" y="10" width="10" height="8" fill="#3f66d0" stroke="none" />
              <path d="M5 7l4-4 4 4z" fill="#c8452f" stroke="none" /><path d="M5 16l4-3 4 3z" fill="#d8b02f" stroke="none" /><path d="M2 1v17M16 1v17" stroke="#999" strokeDasharray="2 2" />
            </Icon>
          </TreeGlyph>
          <Text $ls={-0.1}>Видео</Text>
        </TreeItem>
        <TreeItem>
          <TreeGlyph $w={24}>
            <Icon w={14} h={18} ml={2}><path d="M.5 .5h10l3 3v14H.5z" fill="#fafafa" stroke="#999" strokeWidth="1" /><path d="M6 4h5M3 7h8M3 10h4M3 13h8M3 15.500h8" stroke="#3c8cc8" strokeWidth="1" /><path d="M8 9h3.500v3H8z" fill="#3c8cc8" stroke="none" /></Icon>
          </TreeGlyph>
          <Text $ls={-0.15}>Документы</Text>
        </TreeItem>
        <TreeItem>
          <TreeGlyph $w={24}><Icon w={16} h={16} ml={2}><path d="M4 0h8v8h4l-8 8-8-8h4z" fill="#3a96e8" stroke="none" /></Icon></TreeGlyph>
          <Text $ls={-0.1}>Загрузки</Text>
        </TreeItem>
        <TreeItem>
          <TreeGlyph $w={24}><Picture w={18} h={14} /></TreeGlyph>
          <Text $ls={0}>Изображения</Text>
        </TreeItem>
      </Tree>
      <TreeScroll>
        <Icon w={10} h={7} color="#7a7a7a"><path d="M1 6l4-4.500L9 6" strokeWidth="1.8" /></Icon>
        <TreeThumb />
        <Icon w={10} h={7} color="#7a7a7a"><path d="M1 1l4 4.500L9 1" strokeWidth="1.8" /></Icon>
      </TreeScroll>
      <ListPane>
        <ListHead>
          <HeadCell $pad={23}>Имя<SortMark><Icon w={9} h={5} color="#9a9a9a"><path d="M0 5l4.500-4.500L9 5" strokeWidth="1.1" /></Icon></SortMark></HeadCell>
          <HeadCell $pad={7}>Дата изменения</HeadCell>
          <HeadCell $pad={7}>Тип</HeadCell>
          <HeadCell $pad={7} $last>Размер</HeadCell>
        </ListHead>
        <Spacer />
        {FILES.map(([n, d, t, s], i) => (
          <FileRow key={n} $on={i === 3}>
            <FileGlyph>{i === 0 ? <PdfFile /> : <PngFile />}</FileGlyph>
            <FileName>{n}</FileName>
            <FileDate>{d}</FileDate>
            <FileKind>{t}</FileKind>
            <FileSize>{s}</FileSize>
          </FileRow>
        ))}
        <HScroll>
          <Icon w={7} h={10} color="#7a7a7a"><path d="M6 1L1.500 5 6 9" strokeWidth="1.8" /></Icon>
          <HThumb />
          <Icon w={7} h={10} ml={35} color="#7a7a7a"><path d="M1 1l4.500 4L1 9" strokeWidth="1.8" /></Icon>
        </HScroll>
      </ListPane>
    </ExBody>
    <ExStatus>
      <StatusText $ml={17} $w={91} $ls={-0.2}>Элементов: 6</StatusText>
      <VLine $ml={12} $h={13} $c="#fff" />
      <StatusText $ml={12} $w={181} $ls={-0.1}>Выбран 1 элемент: 297 КБ</StatusText>
      <VLine $ml={12} $h={13} $c="#fff" />
      <ViewToggle>
        <Icon w={18} h={16}><path d="M7 3h4M12.500 3h5M7 8h4M12.500 8h5M7 13h4M12.500 13h5" stroke="#999" strokeWidth="1" /><g fill="#3a7a9a" stroke="#f4f4f4" strokeWidth="1.5"><rect x=".8" y="1" width="3.5" height="3.5" /><rect x=".8" y="6" width="3.5" height="3.5" /><rect x=".8" y="11" width="3.5" height="3.5" fill="#c0392b" /></g></Icon>
      </ViewToggle>
      <Picture w={18} h={14} ml={5} />
    </ExStatus>
  </Explorer>
);

const PropsArrow = styled.div`
  padding-top: 5px;
`;

/* ---------- Word ---------- */

const Word = styled.section`
  width: 960px;
  flex: none;
  display: flex;
  flex-direction: column;
  border-left: 1px solid #3a3a3a;
  border-bottom: 1px solid #444;
  background: #666;
  overflow: hidden;
`;
const WordTitle = styled(Row)`
  height: 44px;
  flex: none;
  background: #444;
  color: #fff;
  font-size: 14.5px;
`;
const Toggle = styled(Row)`
  width: 47px;
  height: 21px;
  margin: -2px 0 0 8px;
  padding-left: 4px;
  border: 1.5px solid #fff;
  border-radius: 11px;
  flex: none;
`;
const ToggleKnob = styled.span`
  width: 11px;
  height: 11px;
  border-radius: 50%;
  background: #fff;
`;
const Initials = styled.span`
  width: 30px;
  height: 30px;
  margin-left: 13px;
  border-radius: 50%;
  flex: none;
  background: #d13438;
  font-size: 12px;
  line-height: 30px;
  text-align: center;
`;
const WordTabs = styled(Row)`
  height: 38px;
  flex: none;
  background: #bfbbb8;
  color: #333;
  font-size: 16px;
`;
const WordTab = styled(Text)<{ $on?: boolean }>`
  height: 38px;
  line-height: 38px;
  ${(p) =>
    p.$on &&
    css`
      height: 36px;
      align-self: flex-start;
      font-weight: 700;
      font-size: 15.5px;
      color: #222;
      border-bottom: 4px solid #222;
    `}
`;
const CutTab = styled(Text)`
  overflow: hidden;
  color: #000;
`;
const TabScroller = styled(Row)`
  width: 16px;
  height: 38px;
  justify-content: center;
  background: #979797;
  border: 1px solid #3a3a3a;
`;
const WordRibbon = styled.div`
  height: 120px;
  flex: none;
  display: flex;
  background: #bfbbb8;
  color: #262626;
  padding-top: 5px;
`;
const RGroup = styled.div<{ $w: number }>`
  width: ${(p) => p.$w}px;
  height: 109px;
  flex: none;
  border-right: 1px solid #807d7b;
  display: flex;
  flex-direction: column;
`;
const RRow = styled(Row)`
  height: 30px;
  flex: none;
`;
const RFoot = styled(Row)`
  height: 30px;
  margin-bottom: -10px;
  font-size: 12.4px;
  letter-spacing: -0.1px;
`;
const FieldBox = styled(Row)<{ $w: number; $ml: number }>`
  ${gap}
  width: ${(p) => p.$w}px;
  height: 29px;
  padding: 0 3px;
  justify-content: space-between;
  background: #d1cfcd;
  border: 1px solid #8a8886;
  font-size: 14.5px;
  letter-spacing: -0.1px;
`;
const RSep = styled.span<Gap>`
  ${gap}
  width: 1px;
  height: 27px;
  background: #a19f9d;
`;
const Pressed = styled(Row)<{ $w: number; $ml: number }>`
  ${gap}
  width: ${(p) => p.$w}px;
  height: 29px;
  background: #9d9b99;
  border: 1px solid #6c6a68;
`;
const Face = styled(Text)<{ $size: number; $bold?: boolean; $italic?: boolean; $under?: boolean }>`
  font-size: ${(p) => p.$size}px;
  font-weight: ${(p) => (p.$bold ? 700 : 400)};
  font-style: ${(p) => (p.$italic ? "italic" : "normal")};
  text-decoration: ${(p) => (p.$under ? "underline" : "none")};
  text-underline-offset: 3px;
  line-height: 28px;
`;
const Script = styled.span<{ $up?: boolean }>`
  color: #2b6cc4;
  font-size: 9px;
  font-weight: 700;
  line-height: 10px;
  align-self: ${(p) => (p.$up ? "flex-start" : "flex-end")};
  margin: ${(p) => (p.$up ? "3px 0 0 1px" : "0 0 2px 1px")};
`;
const SplitPaste = styled.div`
  display: flex;
  height: 90px;
`;
const Stack = styled.div<{ $w: number; $pt?: number }>`
  width: ${(p) => p.$w}px;
  padding-top: ${(p) => p.$pt ?? 3}px;
  height: 90px;
  flex: none;
  display: flex;
  flex-direction: column;
  align-items: center;
  font-size: 14.4px;
  letter-spacing: -0.1px;
  white-space: nowrap;
`;
const StackLabel = styled.div<{ $mt: number }>`
  margin: ${(p) => p.$mt}px 0 5px;
  line-height: 19px;
`;
const FindBox = styled(Row)`
  width: 40px;
  height: 38px;
  justify-content: center;
  background: #d1cfcd;
  border: 1px solid #979593;
`;
const CollapseCell = styled.div`
  flex: 1;
  display: flex;
  justify-content: flex-end;
  align-items: flex-end;
  padding: 0 12px 6px 0;
`;

const Launcher = ({ ml }: { ml?: number }) => (
  <Icon w={11} h={11} ml={ml}><path d="M1 10V.8h9M4 4l5.500 5.500M10 4.500V10H4.500" strokeWidth="1.2" /></Icon>
);
const Lines = ({ xs, ml }: { xs: [number, number][]; ml?: number }) => (
  <Icon w={19} h={17} ml={ml}>
    {xs.map(([a, b], i) => <path key={i} d={`M${a} ${1 + i * 5}H${b}`} strokeWidth="1.6" />)}
  </Icon>
);

const TABS: [string, number, number, number][] = [
  ["Вставка", 6, 59, 10],
  ["Конструктор", 8, 98, 9],
  ["Макет", 7, 48, 8],
  ["Ссылки", 7, 58, 8],
  ["Рассылки", 8, 74, 8],
  ["Рецензирование", 7, 133, 7],
  ["Вид", 6, 29, 7],
  ["Справка", 7, 66, 7],
];

const Workspace = styled.div`
  flex: 1;
  display: flex;
  min-height: 0;
  background: #666;
`;
const Paper = styled.div`
  width: 890px;
  margin-left: 23px;
  background: linear-gradient(#a3a1a0, #fff 9px);
  color: #000;
  overflow: hidden;
`;
const DocTable = styled.div<{ $mt: number }>`
  width: 702px;
  margin: ${(p) => p.$mt}px 0 0 126px;
  border: 1px solid #000;
  border-top: none;
`;
const DocRow = styled.div<{ $h: number }>`
  display: flex;
  height: ${(p) => p.$h}px;
  border-top: 1px solid #000;
`;
const docFont = css`
  font: 700 20px "DejaVu Sans", Verdana, sans-serif;
  -webkit-text-stroke: 0.6px #000;
  line-height: 44.5px;
  white-space: nowrap;
`;
const DocCell = styled.div<{ $w?: number; $ls?: number; $pad?: number }>`
  ${docFont}
  width: ${(p) => (p.$w ? `${p.$w}px` : "auto")};
  flex: ${(p) => (p.$w ? "none" : "1")};
  padding-left: ${(p) => p.$pad ?? 8}px;
  border-right: ${(p) => (p.$w ? "1px solid #000" : "none")};
  letter-spacing: ${(p) => p.$ls ?? 0}px;
`;
const Lift = styled.div`
  margin-top: -6px;
`;
const DocHeading = styled.div`
  ${docFont}
  margin: 39px 0 0 127px;
  letter-spacing: -0.05px;
`;
const Misspelt = styled.span`
  text-decoration: underline wavy #e02020 1px;
  text-decoration-skip-ink: none;
  text-underline-offset: 3px;
`;
const MathBlock = styled.div`
  flex: 1;
  margin-top: -1px;
  padding-left: 2px;
  text-align: center;
  font: 21px "Liberation Serif", "Times New Roman", serif;
  line-height: 24px;
  letter-spacing: 0.65px;
`;
const MathUnder = styled.span`
  text-decoration: underline;
  text-underline-offset: 3px;
  text-decoration-thickness: 1px;
`;
const TextCaret = styled.span`
  display: inline-block;
  width: 1px;
  height: 30px;
  background: #000;
  vertical-align: -7px;
`;
const CellTop = styled.div`
  margin-top: -6px;
  height: 44px;
`;
const HandleLine = styled.div`
  height: 18px;
  margin: -14px 0 0 107px;
`;
const CornerLine = styled.div`
  margin: 1px 0 0 828px;
`;
const Handle = styled(Row)`
  width: 18px;
  height: 18px;
  justify-content: center;
  background: #fff;
  border: 1px solid #9a9a9a;
`;
const WordStatus = styled(Row)`
  height: 27px;
  flex: none;
  background: #bfbbb8;
  border-top: 1px solid #444;
  color: #333;
  font-size: 12.3px;
`;
const ViewOn = styled(Row)`
  width: 50px;
  height: 26px;
  margin-left: 16px;
  justify-content: center;
  background: #9d9b99;
`;
const ZoomTrack = styled.div`
  width: 125px;
  height: 13px;
  margin-left: 6px;
  display: flex;
  align-items: center;
  background: linear-gradient(#888, #888) 0 6px / 100% 1px no-repeat;
  flex: none;
`;
const ZoomThumb = styled.span`
  width: 6px;
  height: 13px;
  margin-left: 53px;
  background: #6e6c6a;
`;
const ZoomMid = styled.span`
  width: 1px;
  height: 7px;
  margin-left: 3px;
  background: #888;
`;

const ROWS: [string, string, number, number][] = [
  ["Число бит подсети", "8", 45, 0.3],
  ["Число созданных подсетей", "256", 45, 0.55],
  ["Число адресов подсети", "256", 46, 0.35],
  ["Число узлов в подсети", "254", 45, 0.4],
];

const WordWindow = () => (
  <Word>
    <WordTitle>
      <Text $ml={26} $w={116} $ls={-0.1}>Автосохранение</Text>
      <Toggle><ToggleKnob /></Toggle>
      <Icon w={20} h={20} ml={16}><path d="M1 1h15l3 3v15H3l-2-2zM5 1v6.500h11V1M5 19v-6.500h10V19M8 19v-4" /></Icon>
      <Icon w={18} h={20} ml={16}><path d="M1 0v8h8M1 8c4-6 10-8 14-4 5 5-1 10-7 15.500" /></Icon>
      <Chevron ml={8} />
      <Icon w={20} h={20} ml={12}><path d="M6 3.500A9 9 0 1 0 14 3.500M0 1.500h6.500V8" strokeWidth="1.6" /></Icon>
      <Icon w={9} h={8} ml={20}><path d="M0 .7h9" strokeWidth="1.3" /><path d="M1 3.500h7L4.500 7z" strokeWidth="1.1" /></Icon>
      <Text $ml={25} $w={90} $ls={-0.15}>BNT11.docx...</Text>
      <Icon w={18} h={18} ml={40}><circle cx="11" cy="6.5" r="5.8" /><path d="M7 11L.5 17.500" /></Icon>
      <Text $ml={44} $w={110} $ls={-0.28}>Matvey Ushakoff</Text>
      <Initials>MU</Initials>
      <Icon w={17} h={14} ml={34}><rect x=".7" y=".7" width="15.6" height="12.6" /><path d="M1 3.500h15M8.500 11V5.500M6 8l2.500-2.500L11 8" /></Icon>
      <Icon w={12} h={2} ml={43}><path d="M0 1h12" /></Icon>
      <Icon w={13} h={13} ml={45}><rect x=".7" y=".7" width="11.6" height="11.6" rx="1.5" /></Icon>
      <Icon w={13} h={13} ml={44}><path d="M.5 .5l12 12M12.500 .5l-12 12" /></Icon>
    </WordTitle>
    <WordTabs>
      <WordTab $ml={18} $w={39} $ls={-0.4}>Файл</WordTab>
      <WordTab $ml={25} $w={67} $on>Главная</WordTab>
      <VLine $ml={5} $h={25} $c="#a19f9d" />
      {TABS.map(([t, ml, w, g]) => (
        <React.Fragment key={t}>
          <WordTab $ml={ml} $w={w} $ls={0.05}>{t}</WordTab>
          <VLine $ml={g} $h={25} $c="#a19f9d" />
        </React.Fragment>
      ))}
      <CutTab $ml={19} $w={60}>Конструктор</CutTab>
      <TabScroller><Icon w={4} h={6}><path d="M.5 .5L3 3 .5 5.500" strokeWidth="1.2" /></Icon></TabScroller>
    </WordTabs>
    <WordRibbon>
      <RGroup $w={115}>
        <SplitPaste>
          <Stack $w={80} $pt={4}>
            <Icon w={34} h={38} ml={12}>
              <path d="M1.500 6.500h24v28h-24z" fill="#e0a050" stroke="#c07828" />
              <path d="M5 8h17v24H5z" fill="#f4f6f7" stroke="none" />
              <path d="M6 9V4.500h4C10 0 17 0 17 4.500h4V9z" fill="#f4f6f7" stroke="#444" />
              <path d="M17 16.500h16v20.500H17z" fill="#f4f6f7" stroke="#333" />
            </Icon>
            <StackLabel $mt={4}>Вставить</StackLabel>
            <Chevron ml={4} />
          </Stack>
          <div>
            <RRow>
              <Icon w={13} h={20} ml={4} color="#8a8886"><path d="M2 0l7 14M11 0L4 14" /><circle cx="3" cy="16.5" r="2.5" /><circle cx="10" cy="16.5" r="2.5" /></Icon>
            </RRow>
            <RRow>
              <Icon w={20} h={20} color="#8a8886"><path d="M8 15H1V1h8l2 2" fill="#d6d4d2" /><path d="M8 5h7l4 4v10H8zM11 11h5M11 14.500h5" fill="#d6d4d2" /></Icon>
            </RRow>
            <RRow>
              <Icon w={19} h={20} ml={1}><path d="M1 11l7-4 6 6-4 6z" fill="#f0a060" stroke="#b35a18" /><path d="M7 7l3-2 6 6-2 3z" fill="#fff" stroke="#333" /><path d="M12 6l4-5 2.500 2-4 5.500z" fill="#fff" stroke="#333" /></Icon>
            </RRow>
          </div>
        </SplitPaste>
        <RFoot><Text $ml={3} $w={86}>Буфер обмена</Text><Launcher ml={11} /></RFoot>
      </RGroup>
      <RGroup $w={279}>
        <RRow>
          <FieldBox $ml={10} $w={187}>Arial Black<Chevron /></FieldBox>
          <FieldBox $ml={2} $w={71}>14<Chevron /></FieldBox>
        </RRow>
        <RRow>
          <Face $ml={14} $w={19} $size={17.5} $bold>Ж</Face>
          <Face $ml={14} $w={12} $size={17} $italic>К</Face>
          <Face $ml={18} $w={12} $size={16.5} $under>Ч</Face>
          <Chevron ml={13} />
          <Icon w={20} h={16} ml={12}><text x="10" y="13" textAnchor="middle" fontSize="15" fill="#444" stroke="none" fontFamily="Noto Sans">ab</text><path d="M0 9h20" strokeWidth="1.2" /></Icon>
          <Face $ml={15} $size={15.5} $bold>x</Face><Script>2</Script>
          <Face $ml={15} $size={15.5} $bold>x</Face><Script $up>2</Script>
          <RSep $ml={8} />
          <Icon w={20} h={22} ml={8}><path d="M1 17L7 2l6 15M3 12h8" /><path d="M9 17l6-7 4.500 3.500-6 7z" fill="#fff" stroke="#9b3f9b" /><path d="M9 17l3-3 4 3.500-2.500 3z" fill="#9b3f9b" stroke="none" /></Icon>
        </RRow>
        <RRow>
          <Icon w={20} h={20} ml={14}><path d="M2 18L9 2h2l7 16M5 13h10" stroke="#5aa0e0" strokeWidth="5.5" strokeLinejoin="round" /><path d="M2 18L9 2h2l7 16M5 13h10" stroke="#1f4fa0" strokeWidth="3.6" /><path d="M2.500 18L9.500 2.500h1L17.500 18M5.500 12.500h9" stroke="#f4f8ff" strokeWidth="1.6" /></Icon>
          <Chevron ml={5} />
          <Icon w={20} h={21} ml={14}><rect x="0" y="15.5" width="20" height="5" fill="#ff0" stroke="none" /><path d="M9 7l6-6 3 2-6 7z" fill="#fff" stroke="#333" /><path d="M8 7l5 4-4 2-7 1z" fill="#555" stroke="none" /></Icon>
          <Chevron ml={8} />
          <Icon w={20} h={21} ml={12}><rect x="0" y="15.5" width="20" height="5" fill="#f00" stroke="none" /><path d="M4.500 13L10 .5 15.500 13M6.500 9h7" /></Icon>
          <Chevron ml={8} />
          <Face $ml={13} $w={21} $size={16.5}>Aa</Face>
          <Chevron ml={4} />
          <RSep $ml={11} />
          <Face $ml={9} $w={12} $size={20}>A</Face>
          <Icon w={7} h={16} ml={1} color="#2b6cc4"><path d="M.5 4.500L3.500 1.500l3 3" /></Icon>
          <Face $ml={12} $w={10} $size={17}>A</Face>
          <Icon w={7} h={16} ml={1} color="#2b6cc4"><path d="M.5 1.500l3 3 3-3" /></Icon>
        </RRow>
        <RFoot><Text $ml={107} $w={43}>Шрифт</Text><Launcher ml={114} /></RFoot>
      </RGroup>
      <RGroup $w={231}>
        <RRow>
          <Icon w={19} h={19} ml={14}><path d="M7 2h12M7 9.500h12M7 17h12" /><g fill="#2b6cc4" stroke="none"><rect width="4" height="4" /><rect y="7.5" width="4" height="4" /><rect y="15" width="4" height="4" /></g></Icon>
          <Chevron ml={9} />
          <Icon w={20} h={20} ml={12}><path d="M7 2.500h13M7 10h13M7 17.500h13" /><g fill="#2b6cc4" stroke="none" fontSize="7.5" fontWeight="700" fontFamily="Noto Sans"><text x="0" y="5">1</text><text x="0" y="12.5">2</text><text x="0" y="20">3</text></g></Icon>
          <Chevron ml={8} />
          <Icon w={20} h={20} ml={12}><path d="M5 2.500h14M10 10h9M13 17.500h6" /><g fill="#2b6cc4" stroke="none" fontSize="7.5" fontWeight="700" fontFamily="Noto Sans"><text x="0" y="5">1</text><text x="3" y="13">a</text><text x="9" y="20">i</text></g></Icon>
          <Chevron ml={5} />
          <RSep $ml={12} />
          <Icon w={18} h={18} ml={9}><path d="M0 1.500h18M10 6.500h8M10 11.500h8M0 16.500h18" /><path d="M8 9H1M4 6L1 9l3 3" stroke="#2b6cc4" /></Icon>
          <Icon w={18} h={18} ml={12}><path d="M0 1.500h18M10 6.500h8M10 11.500h8M0 16.500h18" /><path d="M0 9h7M4 6l3 3-3 3" stroke="#2b6cc4" /></Icon>
        </RRow>
        <RRow>
          <Pressed $ml={10} $w={28}><Lines ml={4} xs={[[0, 18], [0, 12], [0, 18], [0, 12]]} /></Pressed>
          <Lines ml={7} xs={[[0, 18], [3, 15], [0, 18], [3, 15]]} />
          <Lines ml={11} xs={[[0, 18], [6, 18], [0, 18], [6, 18]]} />
          <Lines ml={11} xs={[[0, 18], [0, 18], [0, 18], [0, 18]]} />
          <RSep $ml={8} />
          <Icon w={21} h={19} ml={7}><path d="M9 2h12M9 7h12M9 12h12M9 17h12" /><path d="M3.500 1v7M.5 4l3-3 3 3M3.500 11v7M.5 15l3 3 3-3" stroke="#2b6cc4" /></Icon>
          <Chevron ml={5} />
        </RRow>
        <RRow>
          <Icon w={20} h={21} ml={14}><rect x=".5" y="15.5" width="19" height="4.5" fill="#d6d4d2" stroke="#999" strokeWidth="1" /><path d="M3 8l7-7 5 6-7 6z" fill="#fff" stroke="#333" /><path d="M14 5c4 1 4 4 3.500 8" stroke="#1f4fa0" strokeWidth="2" /></Icon>
          <Chevron ml={8} />
          <Pressed $ml={8} $w={47}>
            <Icon w={19} h={20} ml={3}><rect x="0" y="0" width="19" height="19" fill="#f4f4f4" stroke="none" /><path d="M.5 .5h18v18H.5z" stroke="#333" strokeWidth="1" strokeDasharray="1.5 1.5" /><path d="M0 19h19M0 9.500h19M9.500 0v19" strokeWidth="1" strokeDasharray="2 1" /></Icon>
            <Chevron ml={9} />
          </Pressed>
          <RSep $ml={4} />
          <Icon w={20} h={21} ml={8}><g stroke="none" fontFamily="Noto Sans" fontWeight="700" fontSize="10.8"><text x="1" y="8.5" fill="#2b6cc4">A</text><text x="1" y="20" fill="#222">Я</text></g><path d="M16 1v18M12 15.500l4 4 4-4" /></Icon>
          <RSep $ml={8} />
          <Icon w={13} h={16} ml={12}><path d="M5 .7h8M7 1v15M11 1v15" strokeWidth="1.4" /><path d="M7 0v9H5A4.500 4.500 0 0 1 5 0z" fill="#222" stroke="none" /></Icon>
        </RRow>
        <RFoot><Text $ml={86} $w={36}>Абзац</Text><Launcher ml={94} /></RFoot>
      </RGroup>
      <RGroup $w={72}>
        <Stack $w={71} $pt={6}>
          <Icon w={38} h={37} ml={2}>
            <path d="M1 30L12 1l10 24M5 20h14" stroke="#111" strokeWidth="2.6" />
            <path d="M20 25L34 10l3 1-12 18z" fill="#fff" stroke="#333" />
            <path d="M10 33c4 0 4-8 10-8 6 1 6 9-1 10-4 0-7 0-9-2z" fill="#5aa0e0" stroke="#1f5fb0" />
          </Icon>
          <StackLabel $mt={3}>Стили</StackLabel>
          <Chevron />
        </Stack>
        <RFoot><Text $ml={7} $w={36}>Стили</Text><Launcher ml={14} /></RFoot>
      </RGroup>
      <RGroup $w={135}>
        <Stack $w={134} $pt={0}>
          <FindBox><Icon w={19} h={20}><circle cx="12" cy="7" r="6.2" fill="#f4f6f7" /><path d="M8 11.500L.5 19" /></Icon></FindBox>
          <StackLabel $mt={5}>Редактирование</StackLabel>
          <Chevron />
        </Stack>
      </RGroup>
      <CollapseCell><Icon w={13} h={8}><path d="M1 7l5.500-5.500L12 7" strokeWidth="1.6" /></Icon></CollapseCell>
    </WordRibbon>
    <Workspace>
      <Paper>
        <DocTable $mt={-35}>
          <DocRow $h={45}><DocCell $w={276} /><DocCell /></DocRow>
          <DocRow $h={45}><DocCell $w={276} $ls={0.35}><Lift>Маска подсети</Lift></DocCell><DocCell $pad={9}><Lift>255.255.0.0</Lift></DocCell></DocRow>
          <DocRow $h={45}><DocCell $w={276} $ls={0.4}><Lift>Новая маска подсети</Lift></DocCell><DocCell $pad={9}><Lift>255.255.255.0</Lift></DocCell></DocRow>
        </DocTable>
        <DocHeading>Определить:</DocHeading>
        <HandleLine>
          <Handle><Icon w={14} h={14}><path d="M7 1v12M1 7h12M5 3l2-2 2 2M5 11l2 2 2-2M3 5L1 7l2 2M11 5l2 2-2 2" strokeWidth="1.1" /></Icon></Handle>
        </HandleLine>
        <DocTable $mt={1}>
          {ROWS.map(([n, v, h, ls]) => (
            <DocRow key={n} $h={h}><DocCell $w={351} $ls={ls}><Lift>{n}</Lift></DocCell><DocCell><Lift>{v}</Lift></DocCell></DocRow>
          ))}
          <DocRow $h={79}>
            <DocCell $w={351} $ls={0.1}><Lift>IPv4-адрес подсети</Lift></DocCell>
            <MathBlock>
              128.127.000.035
              <br />
              <MathUnder>255.255.255.000</MathUnder>
              <br />
              128.127.000.000
            </MathBlock>
          </DocRow>
          <DocRow $h={89}>
            <DocCell $w={351} $ls={0.2}><Lift><Misspelt>IPv</Misspelt>4-адрес первого узла<br />подсети</Lift></DocCell>
            <DocCell><Lift>128.127.0.1</Lift></DocCell>
          </DocRow>
          <DocRow $h={90}>
            <DocCell $w={351} $ls={0.2}><Lift><Misspelt>IPv</Misspelt>4-адрес последнего<br />узла подсети</Lift></DocCell>
            <DocCell><Lift>128.127.0.254</Lift></DocCell>
          </DocRow>
          <DocRow $h={89}>
            <DocCell $w={351} $ls={0.1}><Lift>Широковещательный IPv4-<br />адрес подсети</Lift></DocCell>
            <DocCell $ls={-0.05}><CellTop>128.127.0.255<TextCaret /></CellTop></DocCell>
          </DocRow>
        </DocTable>
        <CornerLine><Handle /></CornerLine>
      </Paper>
    </Workspace>
    <WordStatus>
      <Text $ml={10} $w={102} $ls={0}>Страница 9 из 10</Text>
      <Text $ml={24} $w={97} $ls={0.1}>Число слов: 289</Text>
      <Icon w={18} h={16} ml={24}><path d="M8 2v11l-2-1H1V1h5zl2-1h5v6M10 9l7 7M17 9l-7 7" strokeWidth="1.3" /></Icon>
      <Text $ml={22} $w={46} $ls={-0.1}>русский</Text>
      <Icon w={18} h={17} ml={118}><path d="M4 .8H.8V4M14 .8h3.200V4M4 16.200H.8V13M14 16.200h3.200V13M5 4h5l3 3v6.500H5zM10 4v3h3" strokeWidth="1.3" /></Icon>
      <Text $ml={3} $w={78} $ls={0}>Фокусировка</Text>
      <Icon w={18} h={16} ml={30}><path d="M9 3v12l-2-1H1V1.500h6zl2-1.500h7.500V14H11l-2 1M3 5h4M3 8h4M3 11h4M11 5h4M11 8h4M11 11h4" strokeWidth="1.3" /></Icon>
      <ViewOn><Icon w={15} h={17}><rect x=".7" y=".7" width="13.6" height="15.6" /><path d="M3 4h9M3 7h9M3 10h9M3 13h9" strokeWidth="1.2" /></Icon></ViewOn>
      <Icon w={18} h={17} ml={16}><path d="M7 15.500H1V1h14v5M3 4h10M3 7h5M3 10h4" strokeWidth="1.2" /><circle cx="12.5" cy="11.5" r="5" fill="#555" strokeWidth="1" /><path d="M8 11.500h9M12.500 7v9" stroke="#bfbbb8" strokeWidth=".8" /></Icon>
      <Icon w={10} h={2} ml={23}><path d="M0 1h10" /></Icon>
      <ZoomTrack><ZoomThumb /><ZoomMid /></ZoomTrack>
      <Icon w={10} h={10} ml={6}><path d="M0 5h10M5 0v10" strokeWidth="1.3" /></Icon>
      <Text $ml={16}>90 %</Text>
    </WordStatus>
  </Word>
);

/* ---------- taskbar ---------- */

const Bar = styled.footer`
  height: 50px;
  flex: none;
  display: flex;
  align-items: center;
  background: #1c1c1c;
  color: #fff;
  font-size: 14px;
`;
const TaskButton = styled.div<{ $w: number; $ml: number; $on?: boolean; $multi?: boolean }>`
  ${gap}
  width: ${(p) => p.$w}px;
  height: 50px;
  display: flex;
  align-items: center;
  justify-content: center;
  padding-bottom: 1px;
  padding-right: 1px;
  background: linear-gradient(
      90deg,
      #b3b0ad ${(p) => (p.$multi ? "78%" : "100%")},
      #8a8886 ${(p) => (p.$multi ? "78%" : "100%")}
    )
    0 100% / 100% 3px no-repeat ${(p) => (p.$on ? "#4b4b4b" : "transparent")};
`;
const Clock = styled.div`
  width: 71px;
  margin-left: 16px;
  text-align: center;
  line-height: 23px;
  letter-spacing: -0.3px;
  white-space: nowrap;
`;
const Tray = styled(Row)`
  flex: 1;
  margin-left: 1274px;
`;
const PeekEdge = styled.span`
  width: 1px;
  height: 50px;
  margin-left: auto;
  margin-right: 5px;
  background: #4a4a4a;
`;

const Taskbar = () => (
  <Bar>
    <Icon w={20} h={20} ml={20}><path d="M0 2.800l8.500-1.200v8H0zM9.500 1.400L20 0v9.600H9.500zM0 10.600h8.500v8L0 17.400zM9.500 10.600H20V20L9.500 18.700z" fill="#fff" stroke="none" /></Icon>
    <TaskButton $ml={29} $w={51} $multi>
      <Icon w={30} h={30}>
        <defs>
          <linearGradient id="eg" x1="0" y1="0" x2="1" y2=".3"><stop offset="0" stopColor="#1fa3e0" /><stop offset=".6" stopColor="#2fc3c8" /><stop offset="1" stopColor="#62d84e" /></linearGradient>
        </defs>
        <circle cx="15" cy="15" r="15" fill="#1378d4" stroke="none" />
        <path d="M0 14C1 4 9 0 15 0c9 0 15 7 15 13 0 5-4 7-8 7-3 0-4-1-4-2 1-2 1-6-4-8-6-2-12 0-14 4z" fill="url(#eg)" stroke="none" />
        <path d="M11 11c-3 3-3 13 6 17 5 1 9-2 11-5-5 3-12 0-13-5 0-3 1-4 1-6-1-2-3-2-5-1z" fill="#0c4f9e" stroke="none" />
        <path d="M16 13c3 1 3 4 2 6 1 2 8 3 12-1v4c-6 3-14 1-15-4-.5-2 1-3 1-5z" fill="#1c1c1c" stroke="none" />
      </Icon>
    </TaskButton>
    <TaskButton $ml={11} $w={51}>
      <Icon w={28} h={23}>
        <path d="M0 2a2 2 0 0 1 2-2h10l3 3h13v19H0z" fill="#e6a118" stroke="none" /><path d="M0 5h12l3-2h13v19H0z" fill="#ffd35c" stroke="none" />
        <path d="M5 23v-9a2 2 0 0 1 2-2h14a2 2 0 0 1 2 2v9h-4v-5h-9v5z" fill="#3b96dc" stroke="none" />
      </Icon>
    </TaskButton>
    <TaskButton $ml={6} $w={61} $on>
      <Icon w={29} h={28}>
        <g stroke="none">
          <rect x="7" y="0" width="22" height="7" fill="#41a5ee" /><rect x="7" y="7" width="22" height="7" fill="#2b7cd3" /><rect x="7" y="14" width="22" height="7" fill="#185abd" /><rect x="7" y="21" width="22" height="7" fill="#103f91" />
          <rect x="0" y="6" width="16" height="16" rx="1.5" fill="#185abd" />
          <text x="8" y="18.5" fill="#fff" fontSize="12" fontWeight="700" textAnchor="middle" fontFamily="Noto Sans">W</text>
        </g>
      </Icon>
    </TaskButton>
    <TaskButton $ml={6} $w={51}>
      <Icon w={30} h={28}>
        <path d="M13 2c9-1 14 5 14 11s-4 14-13 13c-4-1-1-5-5-6s-7 3-8-1C0 12 4 3 13 2z" fill="#dcebf5" stroke="#9fc0d8" strokeWidth="1" />
        <g stroke="none"><circle cx="5.5" cy="15" r="2.3" fill="#e0533a" /><circle cx="10" cy="9.5" r="2.5" fill="#4ab54a" /><circle cx="16.5" cy="8" r="2.5" fill="#f0b428" /><circle cx="13" cy="17" r="2.2" fill="#1c1c1c" /></g>
        <path d="M26 5L15 28" stroke="#d98a3a" strokeWidth="2.8" /><path d="M22 4l4-4 4 5-3 3z" fill="#c8a070" stroke="none" />
      </Icon>
    </TaskButton>
    <Tray>
      <Icon w={16} h={9}><path d="M1 8.500L8 1l7 7.500" strokeWidth="1.3" /></Icon>
      <Icon w={14} h={18} ml={16}><rect x="1" y="5" width="8" height="9" rx="1" strokeWidth="1.3" /><path d="M9 8.500l4-2v6l-4-2M2 2c2-1.500 5-1.500 7 0M2 16.500c2 1.500 5 1.500 7 0" strokeWidth="1.2" /></Icon>
      <Icon w={19} h={14} ml={12}><rect x="5" y="3" width="12" height="9" strokeWidth="1.2" /><rect x="7" y="5" width="8" height="5" fill="currentColor" stroke="none" /><path d="M18 6v4M1 0v3M4 0v3M0 3h5v3H0zM2.500 6v4h3" strokeWidth="1.1" /></Icon>
      <Icon w={16} h={16} ml={13} color="#c8c8c8"><path d="M1 15A14 14 0 0 1 15 1M5 15A10 10 0 0 1 15 5M8.500 15A6.500 6.500 0 0 1 15 8.500M12 15a3 3 0 0 1 3-3" strokeWidth="1.3" /></Icon>
      <Icon w={19} h={14} ml={12}><path d="M1 5v4h3l4 4V1L4 5zM12 4.500l6 6M18 4.500l-6 6" strokeWidth="1.2" /></Icon>
      <Text $ml={15} $w={26} $ls={-0.4}>РУС</Text>
      <Clock>11:26<br />07.04.2023</Clock>
      <Icon w={19} h={19} ml={25}><path d="M1 1h17v14h-6l-2.500 3L7 15H1z" strokeWidth="1.3" /></Icon>
      <PeekEdge />
    </Tray>
  </Bar>
);

export default function App() {
  return (
    <Screen>
      <Global />
      <Main>
        <LeftHalf>
          <TopLeft>
            <DesktopArea />
            <EdgeWindow />
          </TopLeft>
          <ExplorerWindow />
        </LeftHalf>
        <WordWindow />
      </Main>
      <Taskbar />
    </Screen>
  );
}
